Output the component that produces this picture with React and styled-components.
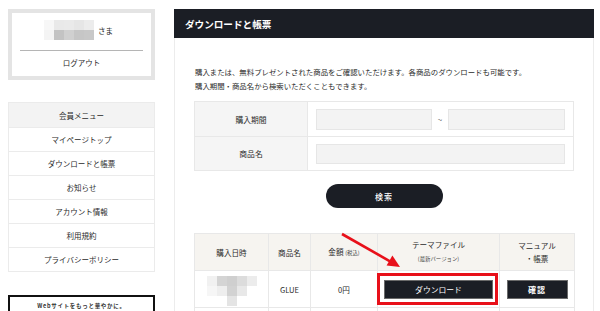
import React from "react";
import styled, { createGlobalStyle } from "styled-components";

const Global = createGlobalStyle`
  html, body { margin: 0; padding: 0; background: #fff; overflow: hidden; }
  body { font-family: "Noto Sans CJK JP", "Noto Sans", sans-serif; color: #2a2a2a; }
  * { box-sizing: border-box; }
`;

const Page = styled.div`
  position: relative;
  width: 600px;
  height: 311px;
  overflow: hidden;
  display: flex;
  align-items: flex-start;
  padding: 9px 0 0 8px;
  gap: 19px;
`;

const Sidebar = styled.aside`
  width: 147px;
  display: flex;
  flex-direction: column;
`;

const AccountBox = styled.div`
  height: 71px;
  border: 4px solid #e4e4e4;
  display: flex;
  flex-direction: column;
  align-items: center;
  padding: 7px 8px 0;
`;

const NameRow = styled.div`
  display: flex;
  align-items: center;
  gap: 4px;
  height: 20px;
  font-size: 7.5px;
  margin-left: -6px;
`;

const Divider = styled.hr`
  width: 100%;
  border: 0;
  border-top: 1px solid #b5b5b5;
  margin: 10px 0 0;
`;

const Logout = styled.div`
  font-size: 7.5px;
  line-height: 12px;
  margin-top: 6px;
`;

const Menu = styled.ul`
  list-style: none;
  margin: 22px 0 0;
  padding: 0;
  border: 1px solid #ebebeb;
`;

const MenuItem = styled.li`
  height: 24px;
  display: flex;
  align-items: center;
  justify-content: center;
  font-size: 7.5px;
  background: ${(p) => (p.$head ? "#f3f3f3" : "#fff")};
  border-top: ${(p) => (p.$head ? "none" : "1px solid #ebebeb")};
`;

const Banner = styled.div`
  margin-top: 23px;
  height: 30px;
  border: 2px solid #111;
  display: flex;
  justify-content: center;
  padding-top: 5px;
  font-size: 5.5px;
  line-height: 8px;
  font-weight: 700;
  letter-spacing: 0.7px;
  color: #333;
`;

const Main = styled.main`
  width: 420px;
  display: flex;
  flex-direction: column;
`;

const PanelHead = styled.h1`
  margin: 0;
  height: 29px;
  background: #1b1e25;
  color: #fff;
  font-size: 9.6px;
  font-weight: 700;
  display: flex;
  align-items: center;
  padding-left: 11px;
`;

const PanelBody = styled.div`
  border-left: 1px solid #ececec;
  border-right: 1px solid #ececec;
  padding: 27px 19px 0;
  height: 280px;
`;

const Desc = styled.p`
  margin: 0;
  font-size: 7.4px;
  line-height: 14px;
  padding-left: 1px;
`;

const SearchTable = styled.table`
  margin-top: 8px;
  width: 380px;
  border-collapse: collapse;
  td { border: 1px solid #e8e8e8; }
`;

const Label = styled.td`
  width: 114px;
  height: ${(p) => p.$h}px;
  background: #f5f5f5;
  text-align: center;
  font-size: 7.8px;
  padding: 0;
`;

const Field = styled.td`
  padding: 0 8px 0 8px;
`;

const FieldRow = styled.div`
  display: flex;
  align-items: center;
`;

const Input = styled.div`
  height: ${(p) => p.$h || 21}px;
  width: ${(p) => p.$w}px;
  background: #f3f3f3;
  border: 1px solid #e6e6e6;
`;

const Tilde = styled.span`
  width: 16px;
  text-align: center;
  font-size: 8px;
  color: #666;
`;

const SearchBtn = styled.button`
  display: block;
  margin: 13px auto 0;
  width: 117px;
  height: 24px;
  border: 0;
  border-radius: 12px;
  background: #1b1e25;
  color: #fff;
  font-family: inherit;
  font-size: 8px;
  font-weight: 500;
  letter-spacing: 1px;
`;

const Results = styled.table`
  margin-top: 25px;
  width: 380px;
  border-collapse: collapse;
  table-layout: fixed;
  th, td { border: 1px solid #e8e8e8; padding: 0; text-align: center; }
`;

const Th = styled.th`
  height: 37px;
  background: #f6f4f0;
  font-weight: 400;
  font-size: 7.6px;
  line-height: 13px;
  color: #2a2a2a;
`;

const Small = styled.span`
  font-size: 5.4px;
  color: #444;
`;

const Td = styled.td`
  position: relative;
  height: 37px;
  font-size: 7.6px;
  color: #2a2a2a;
`;

const EmptyTd = styled.td`
  height: 8px;
`;

const DarkBtn = styled.button`
  display: block;
  margin: 0 auto;
  width: ${(p) => p.$w}px;
  height: 19px;
  background: #1b1e25;
  border: 1px solid #6a6a6a;
  color: #fff;
  font-family: inherit;
  font-size: ${(p) => p.$fs || 7.8}px;
  font-weight: ${(p) => p.$fw || 400};
  letter-spacing: ${(p) => p.$ls || 0}px;
  padding: 0;
`;

const Highlight = styled.div`
  position: absolute;
  top: 2px;
  bottom: 2px;
  left: -1px;
  right: 1px;
  border: 3px solid #e8101a;
  pointer-events: none;
`;

const Arrow = styled.svg`
  position: absolute;
  left: 330px;
  top: 228px;
  overflow: visible;
`;

const Mosaic = ({ cells, size = 10 }) => {
  const w = Math.max(...cells.map((r) => r.length)) * size;
  const h = cells.length * size;
  return (
    <svg width={w} height={h} style={{ display: "block" }}>
      {cells.map((row, y) =>
        row.map((c, x) =>
          c ? <rect key={x + "-" + y} x={x * size} y={y * size} width={size} height={size} fill={c} /> : null
        )
      )}
    </svg>
  );
};

const nameCells = [
  ["#f7f7f7", "#e9e9e9", "#eaeaea", "#e6e6e6", "#ececec"],
  ["#f4f4f4", "#c3c3c3", "#d0d0d0", "#c6c6c6", "#c8c8c8"],
];

const dateCells = [
  ["#f1f1f1", "#d4d4d4", "#cfcfcf", "#dcdcdc", "#ececec"],
  ["#f6f6f6", "#eeeeee", "#d2d2d2", "#e8e8e8", null],
  [null, null, "#e4e4e4", null, null],
];

const menu = [
  "マイページトップ",
  "ダウンロードと帳票",
  "お知らせ",
  "アカウント情報",
  "利用規約",
  "プライバシーポリシー",
];

export default function App() {
  return (
    <>
      <Global />
      <Page>
        <Sidebar>
          <AccountBox>
            <NameRow>
              <Mosaic cells={nameCells} />
              <span>さま</span>
            </NameRow>
            <Divider />
            <Logout>ログアウト</Logout>
          </AccountBox>
          <Menu>
            <MenuItem $head>会員メニュー</MenuItem>
            {menu.map((m) => (
              <MenuItem key={m}>{m}</MenuItem>
            ))}
          </Menu>
          <Banner>Webサイトをもっと華やかに。</Banner>
        </Sidebar>
        <Main>
          <PanelHead>ダウンロードと帳票</PanelHead>
          <PanelBody>
            <Desc>
              購入または、無料プレゼントされた商品をご確認いただけます。各商品のダウンロードも可能です。
              <br />
              購入期間・商品名から検索いただくこともできます。
            </Desc>
            <SearchTable>
              <tbody>
                <tr>
                  <Label $h={35}>購入期間</Label>
                  <Field>
                    <FieldRow>
                      <Input $w={116} />
                      <Tilde>~</Tilde>
                      <Input $w={117} />
                    </FieldRow>
                  </Field>
                </tr>
                <tr>
                  <Label $h={34}>商品名</Label>
                  <Field>
                    <Input $w={249} $h={20} />
                  </Field>
                </tr>
              </tbody>
            </SearchTable>
            <SearchBtn>検索</SearchBtn>
            <Results>
              <colgroup>
                <col style={{ width: 74 }} />
                <col style={{ width: 42 }} />
                <col style={{ width: 67 }} />
                <col style={{ width: 122 }} />
                <col style={{ width: 75 }} />
              </colgroup>
              <thead>
                <tr>
                  <Th>購入日時</Th>
                  <Th>商品名</Th>
                  <Th>
                    金額 <Small>(税込)</Small>
                  </Th>
                  <Th>
                    テーマファイル
                    <br />
                    <Small>(最新バージョン)</Small>
                  </Th>
                  <Th>
                    マニュアル
                    <br />
                    ・帳票
                  </Th>
                </tr>
              </thead>
              <tbody>
                <tr>
                  <Td>
                    <div style={{ display: "flex", justifyContent: "center", paddingTop: 4 }}>
                      <Mosaic cells={dateCells} size={10} />
                    </div>
                  </Td>
                  <Td>GLUE</Td>
                  <Td>0円</Td>
                  <Td>
                    <DarkBtn $w={109}>ダウンロード</DarkBtn>
                    <Highlight />
                  </Td>
                  <Td>
                    <DarkBtn $w={61} $fs={8} $fw={700} $ls={1}>確認</DarkBtn>
                  </Td>
                </tr>
                <tr>
                  <EmptyTd />
                  <EmptyTd />
                  <EmptyTd />
                  <EmptyTd />
                  <EmptyTd />
                </tr>
              </tbody>
            </Results>
          </PanelBody>
        </Main>
        <Arrow width="80" height="45" viewBox="0 0 80 45">
          <line x1="12" y1="6" x2="60" y2="33.3" stroke="#e8101a" strokeWidth="2.6" />
          <polygon points="70,39 56.6,37.6 62.4,27.6" fill="#e8101a" />
        </Arrow>
      </Page>
    </>
  );
}
